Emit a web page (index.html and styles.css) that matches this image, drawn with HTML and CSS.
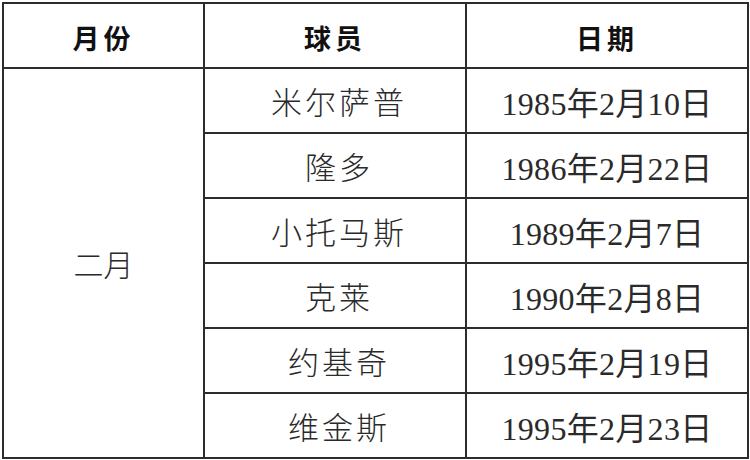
FILE: index.html
```html
<!DOCTYPE html>
<html lang="zh-CN">
<head>
<meta charset="utf-8">
<link rel="stylesheet" href="styles.css">
</head>
<body>
<div class="wrap">
<table class="tbl">
  <colgroup>
    <col class="c1"><col class="c2"><col class="c3">
  </colgroup>
  <thead>
    <tr><th>月份</th><th>球员</th><th>日期</th></tr>
  </thead>
  <tbody>
    <tr><td class="month" rowspan="6">二月</td><td class="name">米尔萨普</td><td class="date">1985年2月10日</td></tr>
    <tr><td class="name">隆多</td><td class="date">1986年2月22日</td></tr>
    <tr><td class="name">小托马斯</td><td class="date">1989年2月7日</td></tr>
    <tr><td class="name">克莱</td><td class="date">1990年2月8日</td></tr>
    <tr><td class="name">约基奇</td><td class="date">1995年2月19日</td></tr>
    <tr><td class="name">维金斯</td><td class="date">1995年2月23日</td></tr>
  </tbody>
</table>
</div>
</body>
</html>
```
FILE: styles.css
```css
html, body {
  margin: 0;
  padding: 0;
  background: #fff;
}
.wrap {
  padding: 2px 0 0 2px;
}
.tbl {
  border-collapse: collapse;
  table-layout: fixed;
  width: 745px;
  font-family: "Liberation Serif", "Noto Sans CJK SC", serif;
  color: #2a2a2a;
}
.c1 { width: 201px; }
.c2 { width: 262px; }
.c3 { width: 282px; }
.tbl tr {
  height: 65px;
}
.tbl th, .tbl td {
  border: 2px solid #2c2c2c;
  padding: 0;
  text-align: center;
  vertical-align: middle;
}
.tbl th {
  font-family: "Noto Sans CJK SC", sans-serif;
  font-weight: 700;
  font-size: 27px;
  letter-spacing: 4px;
  color: #111;
  padding-top: 4px;
}
.tbl td {
  font-size: 32px;
  font-weight: 400;
}
.tbl td.name {
  font-family: "Noto Sans CJK SC", sans-serif;
  font-weight: 300;
  font-size: 31px;
  letter-spacing: 3px;
  padding-left: 8px;
}
.tbl td.month {
  font-family: "Noto Sans CJK SC", sans-serif;
  font-weight: 300;
  font-size: 30px;
}
.tbl td.date {
  letter-spacing: 0.3px;
}
```
